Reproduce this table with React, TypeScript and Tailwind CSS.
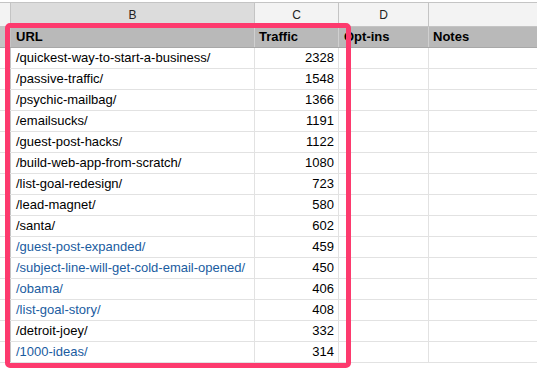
import React from "react";

const rows: [string, string, boolean][] = [
  ["/quickest-way-to-start-a-business/", "2328", false],
  ["/passive-traffic/", "1548", false],
  ["/psychic-mailbag/", "1366", false],
  ["/emailsucks/", "1191", false],
  ["/guest-post-hacks/", "1122", false],
  ["/build-web-app-from-scratch/", "1080", false],
  ["/list-goal-redesign/", "723", false],
  ["/lead-magnet/", "580", false],
  ["/santa/", "602", false],
  ["/guest-post-expanded/", "459", true],
  ["/subject-line-will-get-cold-email-opened/", "450", true],
  ["/obama/", "406", true],
  ["/list-goal-story/", "408", true],
  ["/detroit-joey/", "332", false],
  ["/1000-ideas/", "314", true],
];

export default function App() {
  return (
    <div
      className="relative w-[537px] h-[372px] overflow-hidden bg-white text-[13px] text-black"
      style={{ fontFamily: '"Liberation Sans", Arial, sans-serif' }}
    >
      <div className="pt-[2px]">
        {/* column letters */}
        <div className="flex h-[25px] border-t border-b border-[#c4c4c4] bg-[#f3f3f3] text-[12px] text-[#222]">
          <div className="w-[11px] border-r border-[#c4c4c4]" />
          <div className="w-[244px] border-r border-[#c4c4c4] bg-[#dcdcdc] flex items-center justify-center">B</div>
          <div className="w-[84px] border-r border-[#c4c4c4] flex items-center justify-center">C</div>
          <div className="w-[90px] border-r border-[#c4c4c4] flex items-center justify-center">D</div>
          <div className="flex-1" />
        </div>
        {/* header row */}
        <div className="flex h-[21px] border-b border-[#a8a8a8] bg-[#b9b9b9] font-bold">
          <div className="w-[11px] border-r border-[#c4c4c4] bg-[#c4c4c4]" />
          <div className="w-[244px] border-r border-[#d0d0d0] px-[5px] flex items-center">URL</div>
          <div className="w-[84px] border-r border-[#d0d0d0] px-[4px] flex items-center">Traffic</div>
          <div className="w-[90px] border-r border-[#d0d0d0] px-[5px] flex items-center">Opt-ins</div>
          <div className="flex-1 px-[4px] flex items-center">Notes</div>
        </div>
        {rows.map(([url, n, link]) => (
          <div key={url} className="flex h-[21px] border-b border-[#e2e2e2]">
            <div className="w-[11px] border-r border-[#c4c4c4] bg-white" />
            <div
              className={`w-[244px] border-r border-[#e2e2e2] px-[5px] flex items-center whitespace-nowrap ${
                link ? "text-[#1a5c9f]" : "text-black"
              }`}
            >
              {url}
            </div>
            <div className="w-[84px] border-r border-[#e2e2e2] px-[4px] flex items-center justify-end">{n}</div>
            <div className="w-[90px] border-r border-[#e2e2e2]" />
            <div className="flex-1" />
          </div>
        ))}
      </div>
      <div className="absolute left-[5px] top-[23px] w-[346px] h-[345px] border-[5px] border-[#fd3a6e] rounded-[5px]" />
    </div>
  );
}
